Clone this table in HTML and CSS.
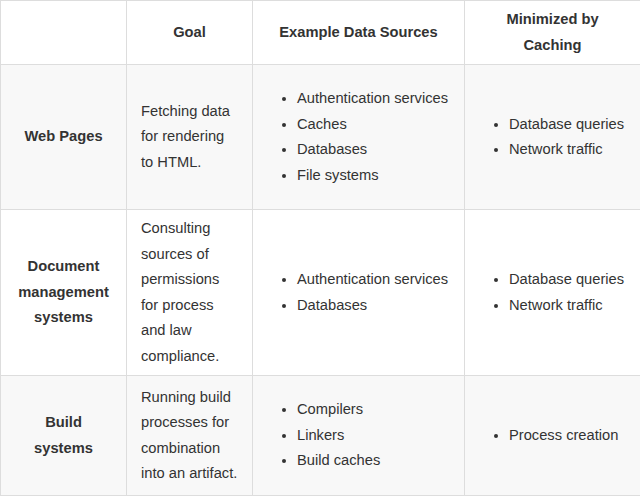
FILE: index.html
```html
<!DOCTYPE html>
<html>
<head>
<meta charset="utf-8">
<link rel="stylesheet" href="styles.css">
</head>
<body>
<table class="grid">
  <colgroup>
    <col class="c1"><col class="c2"><col class="c3"><col class="c4">
  </colgroup>
  <thead>
    <tr class="r-head">
      <th></th>
      <th>Goal</th>
      <th>Example Data Sources</th>
      <th>Minimized by Caching</th>
    </tr>
  </thead>
  <tbody>
    <tr class="r1 striped">
      <th class="rowhead">Web Pages</th>
      <td>Fetching data for rendering to HTML.</td>
      <td><ul><li>Authentication services</li><li>Caches</li><li>Databases</li><li>File systems</li></ul></td>
      <td><ul><li>Database queries</li><li>Network traffic</li></ul></td>
    </tr>
    <tr class="r2">
      <th class="rowhead">Document management systems</th>
      <td>Consulting sources of permissions for process and law compliance.</td>
      <td><ul><li>Authentication services</li><li>Databases</li></ul></td>
      <td><ul><li>Database queries</li><li>Network traffic</li></ul></td>
    </tr>
    <tr class="r3 striped">
      <th class="rowhead">Build systems</th>
      <td>Running build processes for combination into an artifact.</td>
      <td><ul><li>Compilers</li><li>Linkers</li><li>Build caches</li></ul></td>
      <td><ul><li>Process creation</li></ul></td>
    </tr>
  </tbody>
</table>
</body>
</html>
```
FILE: styles.css
```css
html, body {
  margin: 0;
  padding: 0;
  background: #fff;
}
.grid {
  width: 640px;
  border-collapse: collapse;
  table-layout: fixed;
  font-family: "Liberation Sans", Arial, Helvetica, sans-serif;
  font-size: 14.7px;
  line-height: 25.5px;
  color: #333;
}
.c1 { width: 126px; }
.c2 { width: 126px; }
.c3 { width: 212px; }
.c4 { width: 176px; }
.grid th, .grid td {
  border: 1px solid #ddd;
  padding: 6px 13px 6px 14px;
  vertical-align: middle;
  text-align: left;
}
.grid th {
  font-weight: bold;
  text-align: center;
  padding-left: 15px;
  padding-right: 15px;
}
.striped th, .striped td {
  background: #f8f8f8;
}
.r-head { height: 64px; }
.r1 { height: 145px; }
.r2 { height: 166px; }
.r3 { height: 120px; }
.grid ul {
  margin: 0;
  padding-left: 30px;
}
```
